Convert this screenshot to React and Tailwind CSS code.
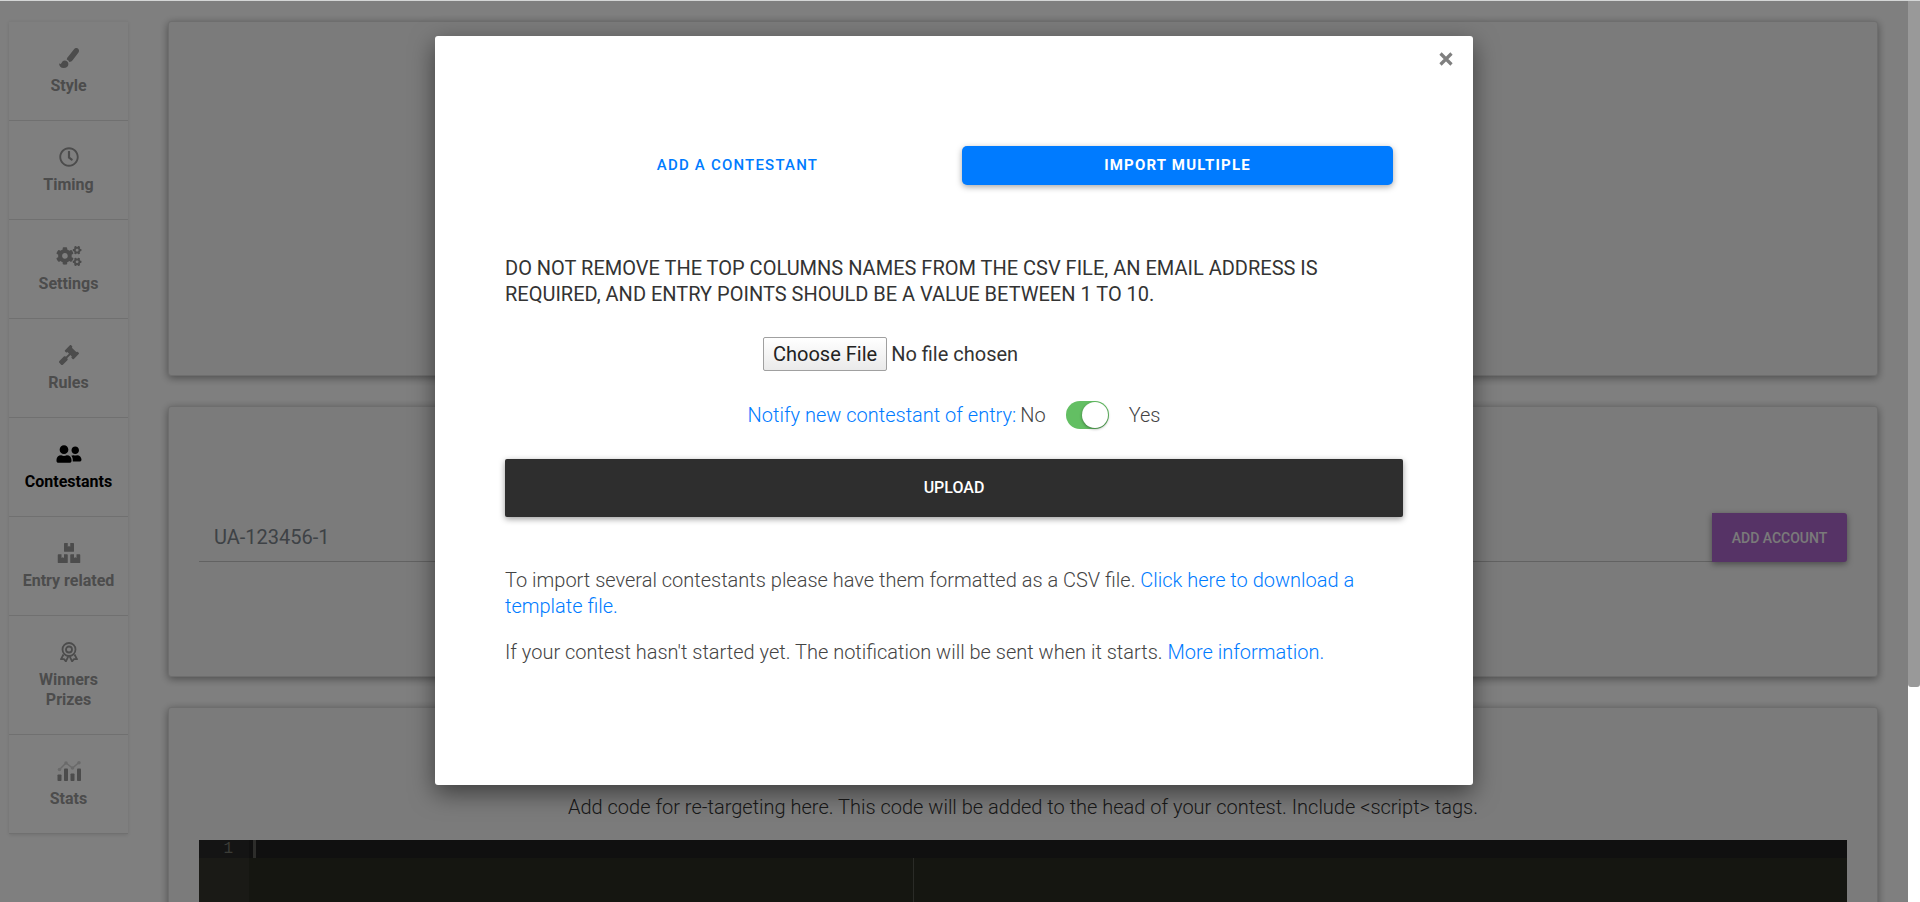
import { FaRegClock, FaCogs, FaGavel, FaUserFriends, FaBoxes } from 'react-icons/fa';

const BrushIcon = ({ className }) => (
  <svg viewBox="0 0 20 20" className={className} fill="currentColor" aria-hidden="true">
    <path d="M15.2.9c1.200-1.200 2.900-1.200 4-.2 1 1 1.100 2.500.3 3.700l-5.700 7.500c-.9 1.200-2 1.900-3.500 2.100-.4-1.300-1.300-2.200-2.600-2.600.2-1.100.7-2 1.600-2.900z" />
    <path d="M5.700 12.5c2 0 3.700 1.500 3.700 3.500 0 2.500-2 4-4.800 4C1.700 20 .2 18.100 0 15.200c.4.3 1 .7 1.500.7 1.400 0 1.300-3.400 4.200-3.400z" />
  </svg>
);

const AwardIcon = ({ className }) => (
  <svg viewBox="0 0 20 20" className={className} fill="none" stroke="currentColor" strokeWidth="1.8" aria-hidden="true">
    <circle cx="10" cy="7.5" r="6.5" />
    <circle cx="10" cy="7.5" r="3" />
    <path d="M4.500 12.500 2 17.200l3-.1 1.900 2.200L9.300 14.300M15.500 12.500 18 17.200l-3-.1-1.900 2.200-2.400-5" strokeLinejoin="round" />
  </svg>
);

const StatsIcon = ({ className }) => (
  <svg viewBox="0 0 24 20" className={className} fill="currentColor" aria-hidden="true">
    <rect x="0.5" y="13.5" width="4" height="6.5" rx="0.8" />
    <rect x="7" y="7.5" width="4" height="12.5" rx="0.8" />
    <rect x="13.5" y="12.5" width="4" height="7.5" rx="0.8" />
    <rect x="20" y="7.5" width="4" height="12.5" rx="0.8" />
    <g opacity="0.4">
      <path d="m2.5 8.5 6.5-6.5 6.5 5 6.5-5.5" fill="none" stroke="currentColor" strokeWidth="1.5" />
      <circle cx="2.5" cy="8.5" r="1.8" />
      <circle cx="9" cy="2" r="1.8" />
      <circle cx="15.5" cy="7" r="1.8" />
      <circle cx="22" cy="1.8" r="1.8" />
    </g>
  </svg>
);

const menu = [
  { label: 'Style', icon: BrushIcon },
  { label: 'Timing', icon: FaRegClock },
  { label: 'Settings', icon: FaCogs },
  { label: 'Rules', icon: FaGavel },
  { label: 'Contestants', icon: FaUserFriends, active: true },
  { label: 'Entry related', icon: FaBoxes },
  { label: 'Winners Prizes', icon: AwardIcon },
  { label: 'Stats', icon: StatsIcon },
];

const Sidebar = () => (
  <nav className="w-[119px] shrink-0 self-start border-t border-[#f6f6f6] shadow-[0_1px_4px_rgba(0,0,0,0.12)]">
    {menu.map(({ label, icon: Icon, active }) => (
      <a
        key={label}
        href="#"
        className={`flex flex-col items-center gap-2 border-b border-[#e0e0e0] px-2 pt-[26px] pb-6 text-center text-base leading-5 font-bold ${
          active ? 'text-black' : 'text-[#989898]'
        }`}
      >
        <Icon className="h-5 w-[26px]" />
        <span className="px-1">{label}</span>
      </a>
    ))}
  </nav>
);

const Card = ({ className, children }) => (
  <section className={`rounded-[3px] border border-[#dcdcdc] bg-[#f6f6f6] px-[30px] shadow-[0_2px_8px_rgba(0,0,0,0.4)] ${className}`}>
    {children}
  </section>
);

const CodeEditor = () => (
  <div className="relative flex h-[300px] bg-[#2b2c22] font-['Liberation_Mono',monospace] text-base leading-[18px]">
    <div className="w-[50px] shrink-0 bg-[#34352d]">
      <div className="bg-[#282828] pr-4 text-right text-[#77786f]">1</div>
    </div>
    <div className="flex-1">
      <div className="h-[18px] bg-[#202020] pl-1">
        <div className="h-full w-[3px] bg-[#5a5a56]" />
      </div>
    </div>
    <div className="absolute top-[18px] bottom-0 left-[714px] w-px bg-[#55564f]" />
  </div>
);

const Settings = () => (
  <main className="flex min-w-0 flex-1 flex-col gap-[30px]">
    <Card className="h-[355px]" />
    <Card className="flex h-[271px] flex-col pt-[106px]">
      <div className="flex">
        <input
          type="text"
          aria-label="Analytics account"
          placeholder="UA-123456-1"
          className="h-[49px] min-w-0 flex-1 border-b border-[#c4c4c4] px-[15px] text-xl placeholder:text-[#7c848c]"
        />
        <button
          type="button"
          className="h-[49px] w-[135px] rounded-r-[3px] bg-[#ad66cc] text-sm font-medium text-[#f4f4f4] shadow-[0_2px_6px_rgba(0,0,0,0.4)]"
        >
          ADD ACCOUNT
        </button>
      </div>
    </Card>
    <Card className="pt-[86px]">
      <p className="mb-5 text-center text-xl leading-[26px] font-light text-[#333]">
        Add code for re-targeting here. This code will be added to the head of your contest. Include &lt;script&gt; tags.
      </p>
      <CodeEditor />
    </Card>
  </main>
);

const ImportModal = () => (
  <div
    role="dialog"
    aria-modal="true"
    className="relative mt-[35px] h-fit w-[1038px] rounded-[3px] bg-white px-[70px] pt-[110px] pb-[120px] text-xl leading-[26px] font-light text-[#444] shadow-[0_8px_24px_rgba(0,0,0,0.5)]"
  >
    <button type="button" aria-label="Close" className="absolute top-3 right-4 text-[#7f7f7f]">
      <svg viewBox="0 0 14 14" className="m-1 h-[14px] w-[14px]" stroke="currentColor" strokeWidth="3.2" aria-hidden="true">
        <path d="m1.5 1.5 11 11m0-11-11 11" />
      </svg>
    </button>

    <div className="mr-[10px] ml-[17px] grid grid-cols-2 gap-[9px] text-[15px] leading-[39px] tracking-[0.08em]">
      <button type="button" className="font-medium text-[#007bff]">
        ADD A CONTESTANT
      </button>
      <button type="button" className="rounded-[5px] bg-[#007bff] font-bold text-white shadow-[0_2px_6px_rgba(0,0,0,0.35)]">
        IMPORT MULTIPLE
      </button>
    </div>

    <p className="mt-[70px] font-normal text-[#333]">
      DO NOT REMOVE THE TOP COLUMNS NAMES FROM THE CSV FILE, AN EMAIL ADDRESS IS REQUIRED, AND ENTRY POINTS SHOULD BE A VALUE
      BETWEEN 1 TO 10.
    </p>

    <input
      type="file"
      aria-label="CSV file"
      className="mx-auto mt-[30px] block w-[382px] font-normal text-[#333] file:mr-1 file:h-[34px] file:rounded-[2px] file:border file:border-solid file:border-[#a0a0a0] file:bg-linear-to-b file:from-white file:to-[#eaeaea] file:px-[9px] file:text-[#222]"
    />

    <div className="mt-[30px] flex h-7 items-center justify-center">
      <a href="#" className="mr-1 text-[#007bff]">
        Notify new contestant of entry:
      </a>
      <label className="flex items-center gap-5">
        <span>No</span>
        <input type="checkbox" defaultChecked className="peer sr-only" />
        <span className="flex h-7 w-[43px] items-center justify-end rounded-full bg-[#63bf63] p-px">
          <span className="h-[26px] w-[26px] rounded-full bg-white shadow-[0_1px_3px_rgba(0,0,0,0.4)]" />
        </span>
        <span>Yes</span>
      </label>
    </div>

    <button
      type="button"
      className="mt-[30px] h-[58px] w-full rounded-[2px] bg-[#2e2e2e] text-base font-medium text-white shadow-[0_2px_6px_rgba(0,0,0,0.4)]"
    >
      UPLOAD
    </button>

    <p className="mt-[50px]">
      To import several contestants please have them formatted as a CSV file.{' '}
      <a href="#" className="text-[#007bff]">
        Click here to download a template file.
      </a>
    </p>
    <p className="mt-5">
      If your contest hasn't started yet. The notification will be sent when it starts.{' '}
      <a href="#" className="text-[#007bff]">
        More information.
      </a>
    </p>
  </div>
);

export default function App() {
  return (
    <div className="flex h-screen flex-col overflow-hidden bg-white font-[Roboto,sans-serif]">
      <div className="h-px shrink-0 bg-[#d4d6d6]" />
      <div className="flex min-h-0 flex-1">
        <div className="relative min-w-0 flex-1 overflow-hidden">
          <div className="flex gap-10 pt-5 pr-[30px] pl-[9px]">
            <Sidebar />
            <Settings />
          </div>
          <div className="absolute inset-0 flex justify-center bg-black/50">
            <ImportModal />
          </div>
        </div>
        <div className="w-3 shrink-0">
          <div className="h-[686px] rounded-b-[3px] bg-[#999]" />
        </div>
      </div>
    </div>
  );
}
